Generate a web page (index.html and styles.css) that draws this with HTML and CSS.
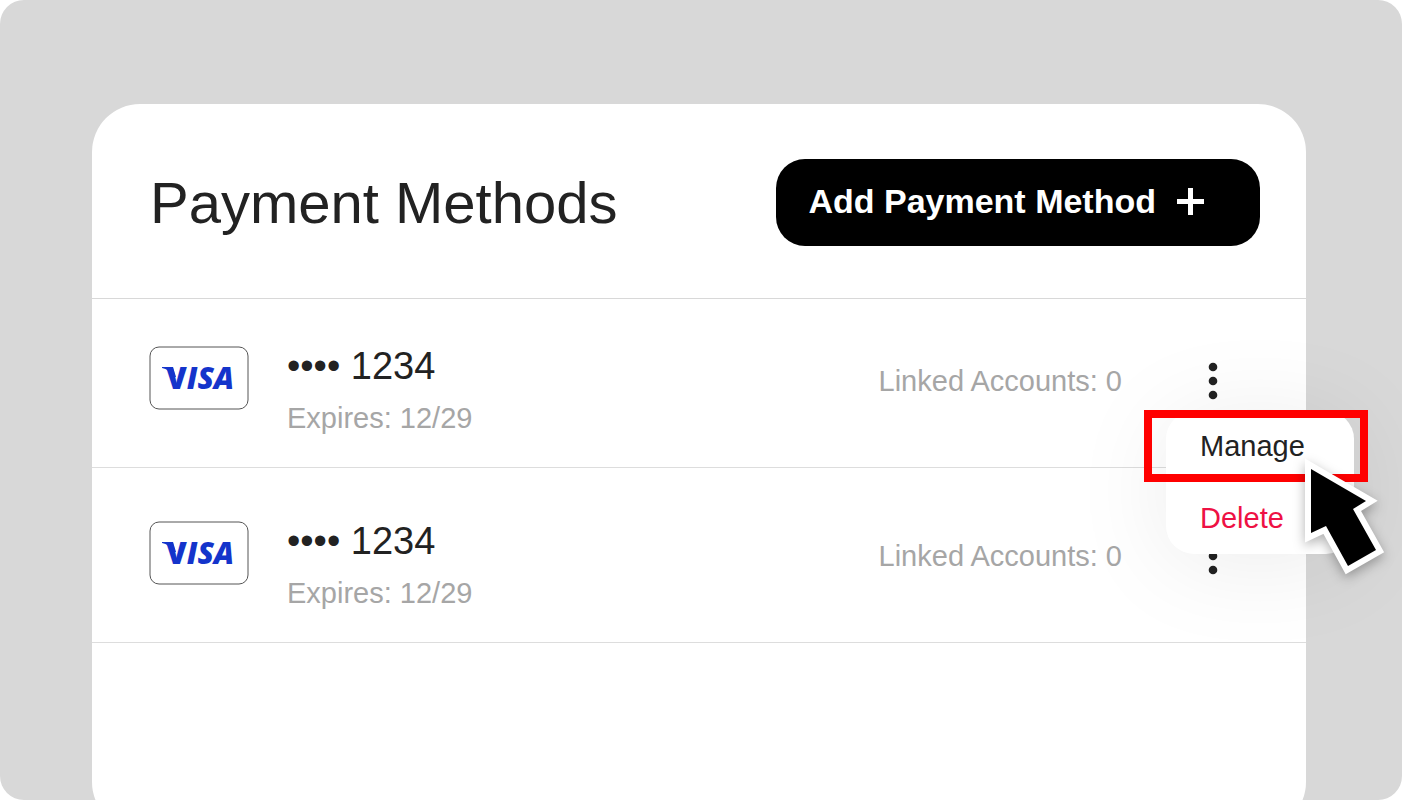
FILE: index.html
```html
<!DOCTYPE html>
<html lang="en">
<head>
    <meta charset="UTF-8">
    <meta name="viewport" content="width=device-width, initial-scale=1.0">
    <title>Payment Methods</title>
    <link rel="stylesheet" href="styles.css">
</head>
<body>

<main class="stage">
    <section class="card">
        <header class="card-header">
            <h1>Payment Methods</h1>
            <button class="add-button" type="button">
                Add Payment Method
                <svg width="28" height="28" viewBox="0 0 28 28" aria-hidden="true">
                    <path d="M14.5 0v27M1 13.5h27" stroke="currentColor" stroke-width="5"/>
                </svg>
            </button>
        </header>

        <ul class="methods">
            <li class="method">
                <svg class="brand" width="100" height="64" viewBox="0 0 100 64" role="img" aria-label="Visa">
                    <rect x="1" y="1" width="98" height="62" rx="9" fill="#fff" stroke="#555"/>
                    <path class="brand-ink" d="M13 21h11l3 10h-5C21 25 18 23 13 22z"/>
                    <text class="brand-ink brand-name" x="17" y="43"><tspan class="brand-v">V</tspan>ISA</text>
                </svg>
                <div class="details">
                    <p class="number">•••• 1234</p>
                    <p class="expires">Expires: 12/29</p>
                </div>
                <p class="linked">Linked Accounts: 0</p>
                <button class="more" type="button" aria-label="More options">
                    <svg width="10" height="38" viewBox="0 0 10 38" aria-hidden="true">
                        <circle cx="5" cy="5" r="4.3"/>
                        <circle cx="5" cy="19" r="4.3"/>
                        <circle cx="5" cy="33" r="4.3"/>
                    </svg>
                </button>

                <!-- Open menu -->
                <div class="menu">
                    <button class="menu-item" type="button">Manage</button>
                    <button class="menu-item delete" type="button">Delete</button>
                    <div class="highlight"></div>
                    <svg class="cursor" width="90" height="126" viewBox="0 0 90 126" aria-hidden="true">
                        <path d="M9 14L64 46L51 54L74 95L46 111L24 71L9 78z" fill="none" stroke="#fff" stroke-width="12"/>
                        <path d="M9 14L64 46L51 54L74 95L46 111L24 71L9 78z"/>
                    </svg>
                </div>
            </li>

            <li class="method">
                <svg class="brand" width="100" height="64" viewBox="0 0 100 64" role="img" aria-label="Visa">
                    <rect x="1" y="1" width="98" height="62" rx="9" fill="#fff" stroke="#555"/>
                    <path class="brand-ink" d="M13 21h11l3 10h-5C21 25 18 23 13 22z"/>
                    <text class="brand-ink brand-name" x="17" y="43"><tspan class="brand-v">V</tspan>ISA</text>
                </svg>
                <div class="details">
                    <p class="number">•••• 1234</p>
                    <p class="expires">Expires: 12/29</p>
                </div>
                <p class="linked">Linked Accounts: 0</p>
                <button class="more" type="button" aria-label="More options">
                    <svg width="10" height="38" viewBox="0 0 10 38" aria-hidden="true">
                        <circle cx="5" cy="5" r="4.3"/>
                        <circle cx="5" cy="19" r="4.3"/>
                        <circle cx="5" cy="33" r="4.3"/>
                    </svg>
                </button>
            </li>
        </ul>
    </section>
</main>

</body>
</html>
```
FILE: styles.css
```css
* {
    box-sizing: border-box;
}

body {
    font-family: "Liberation Sans", Arial, sans-serif;
    background-color: #fff;
    color: #222;
    margin: 0;
}

h1, p, ul {
    margin: 0;
    padding: 0;
    font-weight: normal;
}

button {
    font-family: inherit;
    border: none;
    cursor: pointer;
}

.stage {
    height: 100vh;
    padding: 104px 96px 0 92px;
    background-color: #d8d8d8;
    border-radius: 24px;
    overflow: hidden;
}

.card {
    min-height: calc(100vh - 74px);
    background-color: #fff;
    border-radius: 48px;
}

.card-header {
    display: flex;
    justify-content: space-between;
    align-items: center;
    padding: 55px 46px 52px 58px;
    border-bottom: 1px solid #d8d8d8;
}

h1 {
    font-size: 58px;
    line-height: 66px;
}

.add-button {
    display: flex;
    align-items: center;
    gap: 20px;
    padding: 23px 56px 25px 32px;
    background-color: #000;
    color: #fff;
    border-radius: 29px;
    font-size: 34px;
    font-weight: bold;
    line-height: 39px;
}

.methods {
    display: flex;
    flex-direction: column;
    gap: 6px;
    list-style: none;
}

.method {
    position: relative;
    display: flex;
    align-items: flex-start;
    padding: 47px 88px 0 57px;
    height: 169px;
    border-bottom: 1px solid #ddd;
}

.brand-ink {
    fill: #1434cb;
}

.brand-name {
    font-family: "Open Sans", "Noto Sans", sans-serif;
    font-size: 30px;
    font-style: italic;
    font-weight: 800;
}

.brand-v {
    font-style: normal;
}

.details {
    flex: 1;
    padding-left: 38px;
}

.number {
    font-size: 38px;
    line-height: 40px;
}

.expires {
    padding-top: 15px;
    font-size: 29px;
    line-height: 34px;
    color: #a6a6a6;
}

.linked {
    padding-top: 18px;
    font-size: 29px;
    line-height: 34px;
    color: #a6a6a6;
}

.more {
    display: flex;
    margin: 16px 0 0 86px;
    padding: 0;
    background: none;
    fill: #222;
}

/* menu and what floats over it */
.menu {
    position: absolute;
    z-index: 1;
    top: 112px;
    right: -48px;
    width: 188px;
    height: 143px;
    background-color: #fff;
    border-radius: 28px;
    box-shadow: 0 8px 100px rgba(0, 0, 0, 0.08);
}

.menu-item {
    display: block;
    width: 100%;
    height: 72px;
    padding: 0 0 2px 34px;
    background: none;
    color: #222;
    font-size: 29px;
    text-align: left;
}

.delete {
    color: #ee1144;
}

.highlight {
    position: absolute;
    top: -1px;
    left: -22px;
    width: 224px;
    height: 72px;
    border: 8px solid #f00;
    pointer-events: none;
}

.cursor {
    position: absolute;
    top: 44px;
    left: 136px;
    filter: drop-shadow(0 4px 6px rgba(0, 0, 0, 0.3));
    pointer-events: none;
}
```
